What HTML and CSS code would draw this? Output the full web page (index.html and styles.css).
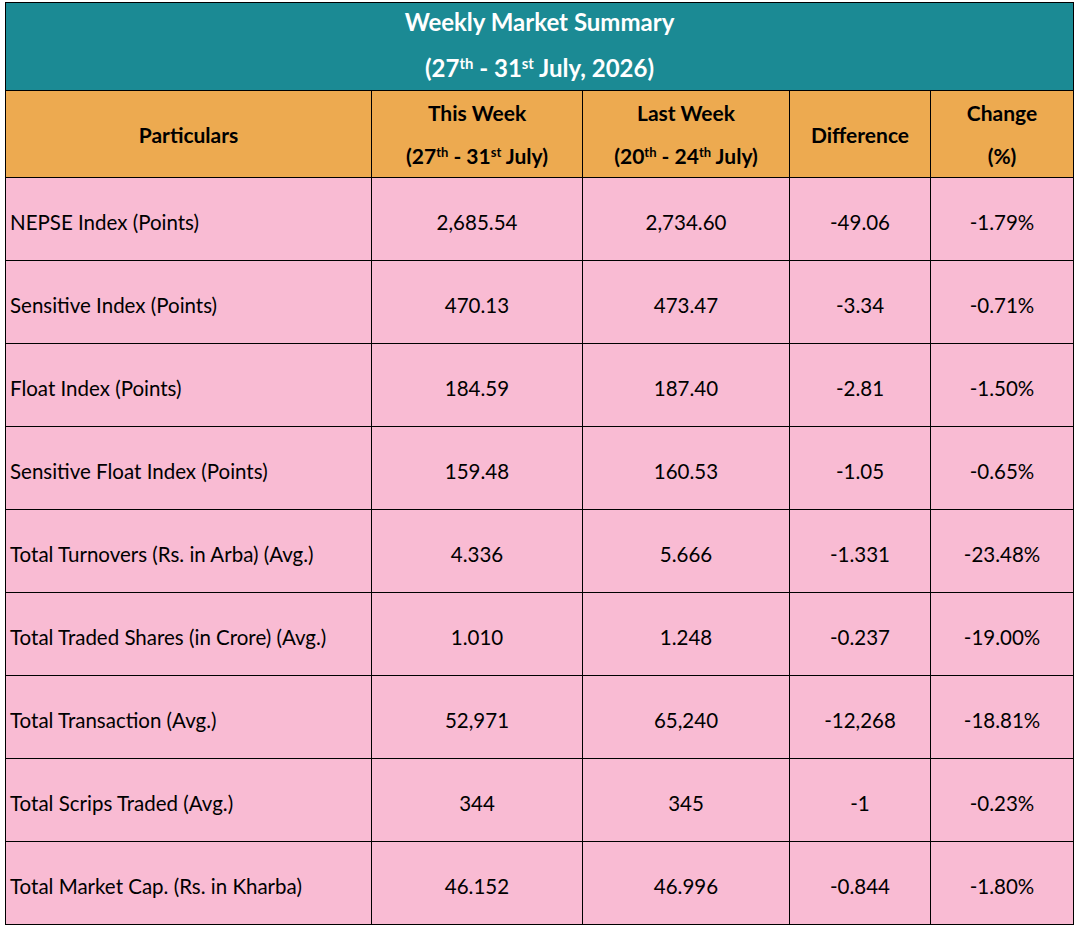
FILE: index.html
```html
<!DOCTYPE html>
<html lang="en">
<head>
<meta charset="utf-8">
<title>Weekly Market Summary</title>
<link rel="stylesheet" href="styles.css">
</head>
<body>
<div class="wrap">
<table class="summary">
  <colgroup>
    <col class="c1"><col class="c2"><col class="c3"><col class="c4"><col class="c5">
  </colgroup>
  <thead>
    <tr class="title-row">
      <th colspan="5"><div class="title-inner">Weekly Market Summary<br>(27<sup>th</sup> - 31<sup>st</sup> July, 2026)</div></th>
    </tr>
    <tr class="head-row">
      <th>Particulars</th>
      <th>This Week<br>(27<sup>th</sup> - 31<sup>st</sup> July)</th>
      <th>Last Week<br>(20<sup>th</sup> - 24<sup>th</sup> July)</th>
      <th>Difference</th>
      <th>Change<br>(%)</th>
    </tr>
  </thead>
  <tbody>
    <tr><td class="label">NEPSE Index (Points)</td><td>2,685.54</td><td>2,734.60</td><td>-49.06</td><td>-1.79%</td></tr>
    <tr><td class="label">Sensitive Index (Points)</td><td>470.13</td><td>473.47</td><td>-3.34</td><td>-0.71%</td></tr>
    <tr><td class="label">Float Index (Points)</td><td>184.59</td><td>187.40</td><td>-2.81</td><td>-1.50%</td></tr>
    <tr><td class="label">Sensitive Float Index (Points)</td><td>159.48</td><td>160.53</td><td>-1.05</td><td>-0.65%</td></tr>
    <tr><td class="label">Total Turnovers (Rs. in Arba) (Avg.)</td><td>4.336</td><td>5.666</td><td>-1.331</td><td>-23.48%</td></tr>
    <tr><td class="label">Total Traded Shares (in Crore) (Avg.)</td><td>1.010</td><td>1.248</td><td>-0.237</td><td>-19.00%</td></tr>
    <tr><td class="label">Total Transaction (Avg.)</td><td>52,971</td><td>65,240</td><td>-12,268</td><td>-18.81%</td></tr>
    <tr><td class="label">Total Scrips Traded (Avg.)</td><td>344</td><td>345</td><td>-1</td><td>-0.23%</td></tr>
    <tr><td class="label">Total Market Cap. (Rs. in Kharba)</td><td>46.152</td><td>46.996</td><td>-0.844</td><td>-1.80%</td></tr>
  </tbody>
</table>
</div>
</body>
</html>
```

FILE: styles.css
```css
html, body {
  margin: 0;
  padding: 0;
  background: #ffffff;
}

.wrap {
  padding: 2px 0 0 5px;
}

.summary {
  border-collapse: collapse;
  table-layout: fixed;
  width: 1068px;
  font-family: Lato, "Liberation Sans", sans-serif;
  color: #000;
}

.c1 { width: 366px; }
.c2 { width: 211px; }
.c3 { width: 207px; }
.c4 { width: 141px; }
.c5 { width: 143px; }

.summary th,
.summary td {
  border: 1px solid #000;
  padding: 0;
  text-align: center;
  box-sizing: border-box;
}

.title-row th {
  background: #1b8a94;
  color: #ffffff;
  font-size: 24px;
  font-weight: 700;
  height: 88px;
  vertical-align: top;
}

.title-inner {
  height: 82px;
  line-height: 46px;
  margin-top: -4px;
}

.head-row th {
  background: #edaa50;
  font-size: 21px;
  font-weight: 700;
  line-height: 43px;
  height: 87px;
}

.summary sup {
  font-size: 0.62em;
  line-height: 0;
  vertical-align: 0.55em;
}

.summary tbody td {
  background: #f9bbd3;
  font-size: 20.5px;
  height: 83px;
  padding-top: 6px;
  vertical-align: middle;
}

.summary td.label {
  text-align: left;
  padding-left: 4px;
}
```
